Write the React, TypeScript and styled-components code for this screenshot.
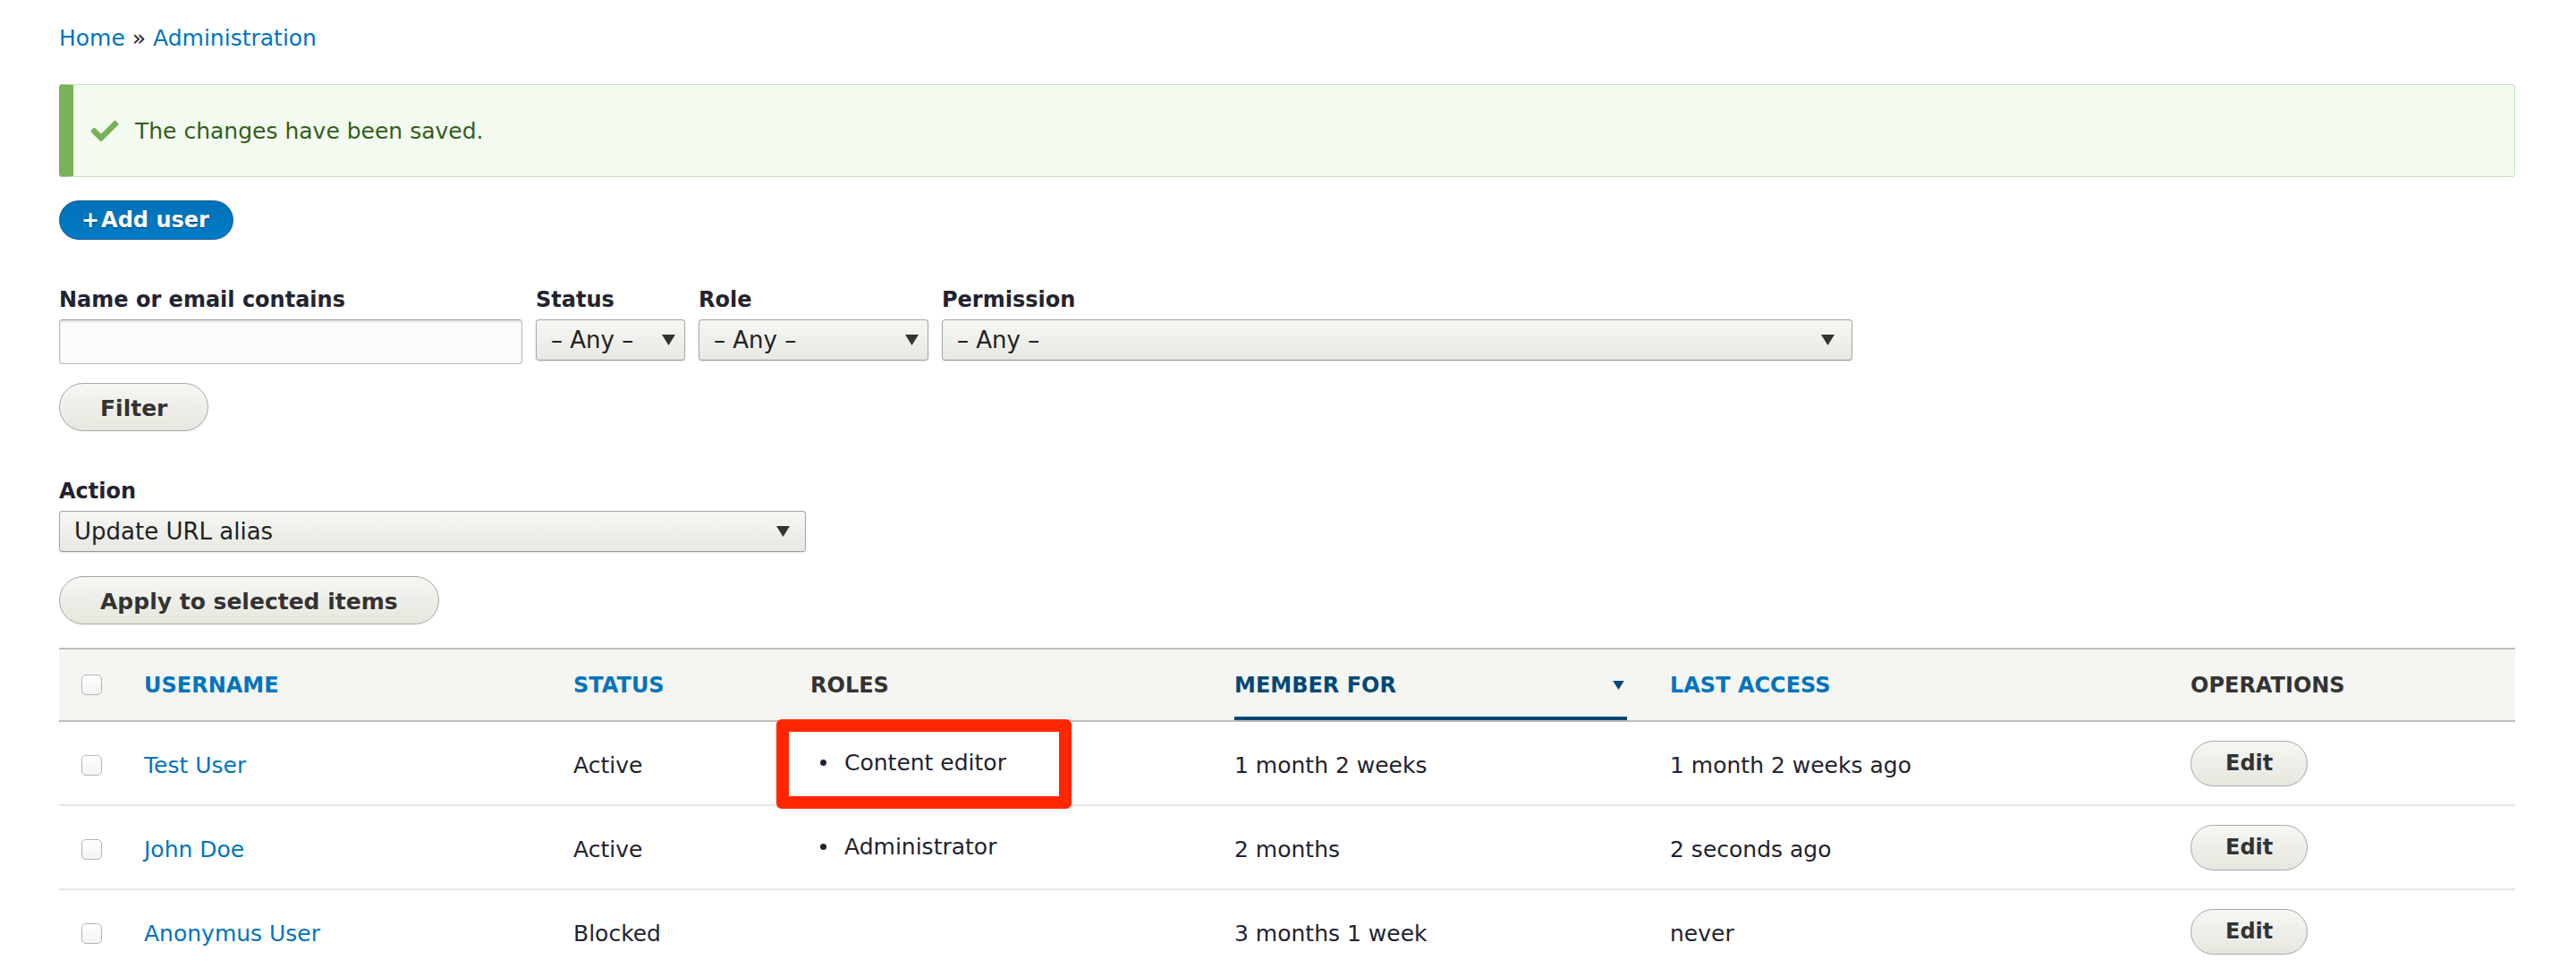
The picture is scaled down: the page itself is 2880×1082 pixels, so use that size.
import styled, { createGlobalStyle } from 'styled-components';

type User = {
  name: string;
  status: string;
  roles: string[];
  member: string;
  access: string;
  highlight?: boolean;
};

const users: User[] = [
  {
    name: 'Test User',
    status: 'Active',
    roles: ['Content editor'],
    member: '1 month 2 weeks',
    access: '1 month 2 weeks ago',
    highlight: true,
  },
  { name: 'John Doe', status: 'Active', roles: ['Administrator'], member: '2 months', access: '2 seconds ago' },
  { name: 'Anonymus User', status: 'Blocked', roles: [], member: '3 months 1 week', access: 'never' },
];

const columns = '95px 480px 265px 474px 487px 582px 1fr';

const SelectArrow = ({ color = '#333' }: { color?: string }) => (
  <svg width="15" height="12" viewBox="0 0 15 12">
    <polygon points="0,0 15,0 7.5,12" fill={color} />
  </svg>
);

const CheckIcon = () => (
  <svg width="34" height="34" viewBox="0 0 16 16">
    <path
      fill="#77b259"
      d="M6.464 13.676c-.194.194-.513.194-.707 0l-4.96-4.955c-.194-.193-.194-.513 0-.707l1.405-1.407c.194-.195.512-.195.707 0l2.849 2.848c.194.193.513.193.707 0l6.629-6.626c.195-.194.514-.194.707 0l1.404 1.404c.193.194.193.513 0 .707l-8.741 8.736z"
    />
  </svg>
);

const Select = ({ value, width, arrowGap }: { value: string; width: number; arrowGap: number }) => (
  <SelectBox $width={width} $arrowGap={arrowGap}>
    <span>{value}</span>
    <SelectArrow />
  </SelectBox>
);

export default function App() {
  return (
    <Page>
      <GlobalStyle />
      <Breadcrumb>
        <Link href="#">Home</Link> » <Link href="#">Administration</Link>
      </Breadcrumb>

      <Message>
        <CheckIcon />
        The changes have been saved.
      </Message>

      <PrimaryButton>
        <Plus>+</Plus>Add user
      </PrimaryButton>

      <FilterRow>
        <Field $width={518}>
          <Label>Name or email contains</Label>
          <TextInput type="text" />
        </Field>
        <Field $width={167}>
          <Label>Status</Label>
          <Select value="– Any –" width={167} arrowGap={10} />
        </Field>
        <Field $width={257}>
          <Label>Role</Label>
          <Select value="– Any –" width={257} arrowGap={10} />
        </Field>
        <Field $width={1018}>
          <Label>Permission</Label>
          <Select value="– Any –" width={1018} arrowGap={19} />
        </Field>
      </FilterRow>

      <Button $gap={21}>Filter</Button>

      <ActionField>
        <Label>Action</Label>
        <Select value="Update URL alias" width={835} arrowGap={17} />
      </ActionField>

      <Button $gap={27}>Apply to selected items</Button>

      <Table>
        <HeaderRow>
          <CheckCell>
            <Checkbox />
          </CheckCell>
          <HeadCell $link>Username</HeadCell>
          <HeadCell $link>Status</HeadCell>
          <HeadCell>Roles</HeadCell>
          <HeadCell $active>
            Member for
            <SortArrow>
              <SelectArrow color="#004875" />
            </SortArrow>
          </HeadCell>
          <HeadCell $link>Last access</HeadCell>
          <HeadCell>Operations</HeadCell>
        </HeaderRow>

        {users.map((user) => (
          <Row key={user.name}>
            <CheckCell $body>
              <Checkbox />
            </CheckCell>
            <Cell>
              <Link href="#">{user.name}</Link>
            </Cell>
            <Cell>{user.status}</Cell>
            <Cell>
              {user.roles.length > 0 && (
                <RoleList>
                  {user.roles.map((role) => (
                    <RoleItem key={role}>{role}</RoleItem>
                  ))}
                </RoleList>
              )}
              {user.highlight && <Highlight />}
            </Cell>
            <Cell>{user.member}</Cell>
            <Cell>{user.access}</Cell>
            <Cell>
              <EditButton>Edit</EditButton>
            </Cell>
          </Row>
        ))}
      </Table>
    </Page>
  );
}

const GlobalStyle = createGlobalStyle`
  html, body {
    margin: 0;
    background: #fff;
  }
  body {
    font-family: 'DejaVu Sans', 'Liberation Sans', sans-serif;
    color: #222330;
  }
`;

const Page = styled.div`
  padding: 23px 68px 0 66px;
`;

const Breadcrumb = styled.nav`
  font-size: 25px;
  line-height: 40px;
  color: #222330;
`;

const Link = styled.a`
  color: #0074bd;
  text-decoration: none;
`;

const Message = styled.div`
  margin-top: 31px;
  height: 104px;
  box-sizing: border-box;
  display: flex;
  align-items: center;
  gap: 17px;
  padding-left: 18px;
  border: 1px solid #c9e1bd;
  border-left: 16px solid #77b259;
  border-radius: 4px;
  background: #f3faef;
  color: #325e1c;
  font-size: 25px;
`;

const PrimaryButton = styled.button`
  margin-top: 26px;
  height: 44px;
  display: flex;
  align-items: center;
  padding: 0 26px 0 24px;
  border: 1px solid #1e5c90;
  border-radius: 22px;
  background: linear-gradient(to bottom, #0071b8, #007bc6);
  color: #fff;
  font-family: inherit;
  font-size: 24px;
  font-weight: bold;
  text-shadow: 0 1px 1px rgba(0, 0, 0, 0.5);
`;

const Plus = styled.span`
  margin-right: 2px;
`;

const FilterRow = styled.div`
  margin-top: 49px;
  display: flex;
  align-items: flex-start;
  gap: 15px;
`;

const Field = styled.div<{ $width: number }>`
  display: flex;
  flex-direction: column;
  width: ${({ $width }) => $width}px;
`;

const ActionField = styled.div`
  margin-top: 49px;
  display: flex;
  flex-direction: column;
`;

const Label = styled.label`
  font-size: 24px;
  font-weight: bold;
  line-height: 36px;
  margin-bottom: 4px;
  white-space: nowrap;
  color: #222330;
`;

const TextInput = styled.input`
  width: 100%;
  height: 50px;
  box-sizing: border-box;
  margin: 0;
  border: 1px solid #b8b8b8;
  border-top-color: #999;
  border-radius: 4px;
  background: #fcfcfa;
  box-shadow: inset 0 2px 3px rgba(0, 0, 0, 0.1);
  font-family: inherit;
  font-size: 25px;
`;

const SelectBox = styled.div<{ $width: number; $arrowGap: number }>`
  width: ${({ $width }) => $width}px;
  height: 46px;
  box-sizing: border-box;
  display: flex;
  align-items: center;
  justify-content: space-between;
  padding: 0 ${({ $arrowGap }) => $arrowGap}px 0 16px;
  border: 1px solid #a6a6a6;
  border-bottom-color: #999;
  border-radius: 4px;
  background: linear-gradient(to bottom, #f6f6f3, #e8e8e3);
  box-shadow: 0 1px 2px rgba(0, 0, 0, 0.1);
  font-size: 26px;
  color: #222;
  white-space: nowrap;
`;

const Button = styled.button<{ $gap: number }>`
  margin-top: ${({ $gap }) => $gap}px;
  height: 54px;
  display: flex;
  align-items: center;
  padding: 2px 45px 0;
  border: 1px solid #a6a6a6;
  border-radius: 27px;
  background: linear-gradient(to bottom, #f6f6f3, #e7e7df);
  color: #333;
  font-family: inherit;
  font-size: 25px;
  font-weight: bold;
  text-shadow: 0 1px rgba(255, 255, 255, 0.6);
`;

const EditButton = styled.button`
  margin-top: -4px;
  height: 51px;
  padding: 0 38px;
  border: 1px solid #a6a6a6;
  border-radius: 26px;
  background: linear-gradient(to bottom, #f6f6f3, #e7e7df);
  color: #333;
  font-family: inherit;
  font-size: 24px;
  font-weight: bold;
  text-shadow: 0 1px rgba(255, 255, 255, 0.6);
`;

const Table = styled.div`
  margin-top: 26px;
`;

const HeaderRow = styled.div`
  display: grid;
  grid-template-columns: ${columns};
  height: 83px;
  box-sizing: border-box;
  border-top: 2px solid #bfbfba;
  border-bottom: 2px solid #bfbfba;
  background: #f5f5f2;
`;

const HeadCell = styled.div<{ $link?: boolean; $active?: boolean }>`
  display: flex;
  align-items: center;
  justify-content: space-between;
  font-size: 24px;
  font-weight: bold;
  text-transform: uppercase;
  white-space: nowrap;
  color: ${({ $link, $active }) => ($active ? '#004875' : $link ? '#0074bd' : '#333')};
  ${({ $active }) =>
    $active &&
    `
    margin-right: 48px;
    padding-top: 4px;
    border-bottom: 4px solid #004875;
  `}
`;

const SortArrow = styled.span`
  display: flex;
  margin-right: 3px;
  svg {
    width: 13px;
    height: 10px;
  }
`;

const CheckCell = styled.div<{ $body?: boolean }>`
  display: flex;
  align-items: center;
  padding-left: 25px;
  padding-top: ${({ $body }) => ($body ? 4 : 0)}px;
`;

const Checkbox = styled.span`
  width: 23px;
  height: 23px;
  box-sizing: border-box;
  border: 1px solid #b4b4b4;
  border-radius: 5px;
  background: linear-gradient(to bottom, #fff, #f3f3f3);
`;

const Row = styled.div`
  display: grid;
  grid-template-columns: ${columns};
  height: 94px;
  box-sizing: border-box;
  border-bottom: 2px solid #e6e4df;
`;

const Cell = styled.div`
  position: relative;
  display: flex;
  align-items: center;
  padding-top: 4px;
  font-size: 25px;
  white-space: nowrap;
  color: #222330;
`;

const RoleList = styled.ul`
  margin: 0 0 6px;
  padding: 0;
  list-style: none;
`;

const RoleItem = styled.li`
  display: flex;
  align-items: center;
  &::before {
    content: '';
    width: 7px;
    height: 7px;
    border-radius: 50%;
    background: #222330;
    margin: 0 20px 0 11px;
  }
`;

const Highlight = styled.div`
  position: absolute;
  left: -38px;
  top: -3px;
  width: 330px;
  height: 100px;
  box-sizing: border-box;
  border: 14px solid #ff2600;
  border-radius: 6px;
  pointer-events: none;
`;
